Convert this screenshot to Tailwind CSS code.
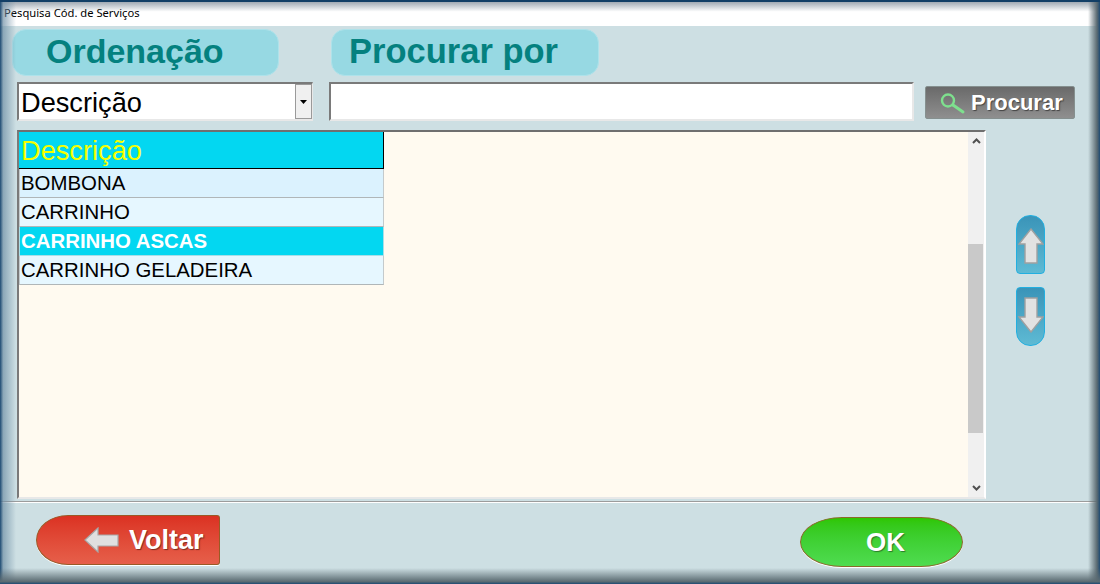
<!DOCTYPE html>
<html><head><meta charset="utf-8"><script src="https://cdn.jsdelivr.net/npm/@tailwindcss/browser@4"></script></head>
<body class="m-0 overflow-hidden">
<div class="relative w-[1100px] h-[584px] overflow-hidden flex flex-col bg-[#cddfe3] font-['Liberation_Sans',Arial,sans-serif] text-black">
  <!-- title bar -->
  <div class="h-[26px] shrink-0 bg-gradient-to-b from-[#8f9aa5] via-white via-[45%] to-white pl-[4px] pt-[5px] text-[11.2px] leading-[16px] font-['Noto_Sans',sans-serif]">Pesquisa Cód. de Serviços</div>
  <!-- labels -->
  <div class="flex pl-[12px] pt-[3px] gap-[52px] h-[53px] shrink-0">
    <div class="w-[267px] h-[47px] rounded-[14px] bg-[#97d9e3] border border-[#aee2ea] pl-[33px] text-[#04817f] font-bold text-[34px] leading-[43px]">Ordenação</div>
    <div class="w-[268px] h-[47px] rounded-[14px] bg-[#97d9e3] border border-[#aee2ea] pl-[17px] text-[#04817f] font-bold text-[34.5px] leading-[43px]">Procurar por</div>
  </div>
  <!-- search row -->
  <div class="flex items-start pl-[17px] pt-[3px] h-[51px] shrink-0">
    <div class="w-[296px] h-[39px] bg-white border-2 border-r border-t-[#7a7a7a] border-l-[#7a7a7a] border-r-[#e8e8e8] border-b-[#e8e8e8] flex items-center justify-between pl-[3px] text-[27.2px] leading-[35px]">
      <span class="-ml-[1px] pt-[1px]">Descrição</span>
      <span class="w-[17px] h-[35px] bg-[#f0f0f0] border border-[#9a9a9a] flex items-center justify-center"><svg width="7" height="4" viewBox="0 0 7 4"><path d="M0 0h7L3.5 4z" fill="#000"/></svg></span>
    </div>
    <div class="ml-[16px] w-[585px] h-[39px] bg-white border-2 border-t-[#7a7a7a] border-l-[#7a7a7a] border-r-[#e8e8e8] border-b-[#e8e8e8]"></div>
    <div class="ml-[11px] mt-[4px] w-[150px] h-[33px] rounded-[2px] bg-gradient-to-b from-[#6a6a6a] to-[#8f8f8f] border border-[#85908f] flex items-center pl-[13px] gap-[4px] text-white font-bold text-[22px] [text-shadow:1px_1px_1px_#444]">
      <svg width="28" height="24" viewBox="0 0 28 24" fill="none" class="shrink-0"><circle cx="9" cy="9.5" r="6" stroke="#7ee08e" stroke-width="2.4"/><path d="M14 14L24 21" stroke="#7ee08e" stroke-width="3" stroke-linecap="round"/></svg>
      <span>Procurar</span>
    </div>
  </div>
  <!-- grid and arrows -->
  <div class="flex pl-[17px] h-[371px] shrink-0">
    <div class="w-[969px] h-[369px] bg-[#fffaf0] border-2 border-t-[#6f6f6f] border-l-[#7a7a7a] border-r-white border-b-[#e8e8e8] flex">
      <div class="w-[949px]">
        <div class="w-[365px] h-[37px] bg-[#03d7f1] border-r border-b border-black pl-[2px] pt-[1px] text-[#f5ff00] text-[27.2px] leading-[36px]">Descrição</div>
        <div class="w-[365px] h-[29px] bg-[#dbf2fe] border-x border-b border-x-[#c4cacc] border-b-[#b0b6b8] pl-[1px] text-[20.4px] leading-[28px]">BOMBONA</div>
        <div class="w-[365px] h-[29px] bg-[#e6f7ff] border-x border-b border-x-[#c4cacc] border-b-[#b0b6b8] pl-[1px] text-[20.4px] leading-[28px]">CARRINHO</div>
        <div class="w-[365px] h-[29px] bg-[#03d7f1] border-x border-b border-[#a8dfe8] pl-[1px] text-[20.4px] leading-[28px] font-bold text-white">CARRINHO ASCAS</div>
        <div class="w-[365px] h-[29px] bg-[#e6f7ff] border-x border-b border-x-[#c4cacc] border-b-[#b0b6b8] pl-[1px] text-[20.4px] leading-[28px]">CARRINHO GELADEIRA</div>
      </div>
      <div class="w-[16px] bg-[#f0f0f0] flex flex-col pt-[4px] pb-[4px]">
        <div class="h-[108px] w-full flex justify-center pt-[2px]"><svg width="9" height="6" viewBox="0 0 9 6" fill="none"><path d="M1 5l3.5-3.5L8 5" stroke="#505050" stroke-width="2"/></svg></div>
        <div class="h-[189px] w-[15px] bg-[#c9c9c9]"></div>
        <div class="flex-1 flex justify-center items-end pb-[2px]"><svg width="9" height="6" viewBox="0 0 9 6" fill="none"><path d="M1 1l3.5 3.5L8 1" stroke="#505050" stroke-width="2"/></svg></div>
      </div>
    </div>
    <div class="ml-[30px] pt-[85px] flex flex-col gap-[13px]">
      <div class="w-[29px] h-[59px] rounded-t-[14px] rounded-b-[4px] bg-gradient-to-b from-[#3a94b8] to-[#5ebad4] border border-[#22afe0] flex items-center justify-center">
        <svg width="26" height="36" viewBox="0 0 26 36" class="mt-[2px]"><path d="M13 1L25 16H19V35H7V16H1z" fill="#e2e2e2" stroke="#a0a0a0" stroke-width="1.4"/></svg>
      </div>
      <div class="w-[29px] h-[59px] rounded-b-[14px] rounded-t-[4px] bg-gradient-to-b from-[#3a94b8] to-[#5ebad4] border border-[#22afe0] flex items-center justify-center">
        <svg width="26" height="36" viewBox="0 0 26 36" class="mb-[4px]"><path d="M13 35L25 20H19V1H7V20H1z" fill="#e2e2e2" stroke="#a0a0a0" stroke-width="1.4"/></svg>
      </div>
    </div>
  </div>
  <!-- divider -->
  <div class="h-[2px] shrink-0 border-t border-[#9c9c9c] border-b border-b-white"></div>
  <!-- footer -->
  <div class="relative flex-1 flex pl-[36px] pt-[12px]">
    <div class="w-[184px] h-[50px] rounded-[32px_3px_3px_32px/25px_3px_3px_25px] bg-gradient-to-b from-[#db3122] to-[#e65f4a] border border-[#9a5a25] shadow-[0_1px_0_#fff] flex items-center pl-[47px] gap-[10px] text-white font-bold text-[27px] [text-shadow:1px_1px_1px_#7a2a20]">
      <svg width="35" height="26" viewBox="0 0 35 26" class="shrink-0"><path d="M1 13L14 1V8H34V19H14V25z" fill="#e0e0e0" stroke="#a8a8a8" stroke-width="1.2"/></svg>
      <span class="pt-[1px]">Voltar</span>
    </div>
    <div class="ml-[580px] mt-[2px] w-[163px] h-[50px] rounded-[42px/25px] bg-gradient-to-b from-[#2fc600] to-[#4fdc50] border border-[#8a6a2a] shadow-[0_1px_0_#fff] flex items-center justify-center pl-[8px] text-white font-bold text-[26px] [text-shadow:1px_1px_1px_#2a7a2a]">OK</div>
  </div>
  <!-- window frame shading -->
  <div class="absolute inset-y-0 left-0 w-[16px] pointer-events-none bg-gradient-to-r from-[#1c4a72] via-[#6f8fa5]/70 via-[20%] to-transparent"></div>
  <div class="absolute inset-y-0 right-0 w-[12px] pointer-events-none bg-gradient-to-l from-[#1c4a72] via-[#5b6b72] via-[25%] to-transparent"></div>
  <div class="absolute inset-x-0 bottom-0 h-[16px] pointer-events-none bg-gradient-to-t from-[#1c4a72] via-[#5b6b72] via-[15%] to-transparent"></div>
  <div class="absolute inset-x-0 top-0 h-[2px] pointer-events-none bg-[#123f66]"></div>
</div>
</body></html>
